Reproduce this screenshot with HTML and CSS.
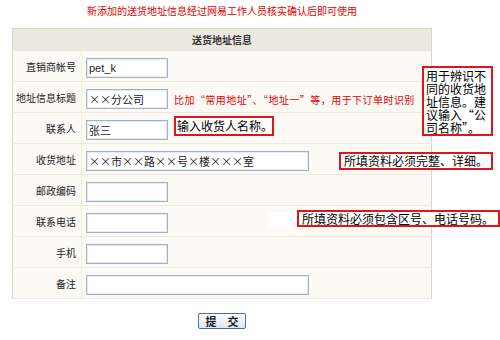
FILE: index.html
```html
<!DOCTYPE html>
<html lang="zh-CN">
<head>
<meta charset="utf-8">
<title>送货地址信息</title>
<link rel="stylesheet" href="styles.css">
</head>
<body>
<div class="page">
  <div class="form-wrap">
    <div class="notice">新添加的送货地址信息经过网易工作人员核实确认后即可使用</div>
    <table class="addr">
      <tr class="head"><th colspan="2">送货地址信息</th></tr>
      <tr><td class="lbl">直销商帐号</td><td class="val"><span class="inp">pet_k</span></td></tr>
      <tr><td class="lbl">地址信息标题</td><td class="val"><span class="inp cjk">××分公司</span><span class="hint">比加“常用地址”、“地址一”等，用于下订单时识别</span></td></tr>
      <tr><td class="lbl">联系人</td><td class="val"><span class="inp cjk">张三</span></td></tr>
      <tr><td class="lbl">收货地址</td><td class="val"><span class="inp cjk wide">××市××路××号×楼×××室</span></td></tr>
      <tr><td class="lbl">邮政编码</td><td class="val"><span class="inp"></span></td></tr>
      <tr><td class="lbl">联系电话</td><td class="val"><span class="inp"></span></td></tr>
      <tr><td class="lbl">手机</td><td class="val"><span class="inp"></span></td></tr>
      <tr><td class="lbl">备注</td><td class="val"><span class="inp wide"></span></td></tr>
    </table>
    <div class="actions"><button class="submit" type="button">提　交</button></div>
  </div>
  <div class="note note-a">用于辨识不同的收货地址信息。建议输入“公司名称”。</div>
  <div class="note note-b">输入收货人名称。</div>
  <div class="note note-c">所填资料必须完整、详细。</div>
  <div class="patch"></div>
  <div class="note note-d">所填资料必须包含区号、电话号码。</div>
</div>
</body>
</html>
```
FILE: styles.css
```css
html, body {
  margin: 0;
  padding: 0;
  background: #ffffff;
}
.page {
  position: relative;
  width: 500px;
  height: 340px;
  overflow: hidden;
  font-family: "Noto Sans CJK SC", "Liberation Sans", sans-serif;
  color: #222;
}
.form-wrap {
  margin-left: 12px;
  width: 420px;
}
.notice {
  height: 28px;
  line-height: 22px;
  text-align: center;
  font-size: 10px;
  color: #e60000;
}
.addr {
  width: 420px;
  border-collapse: collapse;
  border: 1px solid #d9d5cc;
  background: #fcfaf5;
}
.addr th {
  height: 21px;
  padding: 0;
  background: #ece9e1;
  font-size: 10px;
  font-weight: bold;
  color: #333;
  text-align: center;
  border-bottom: 1px solid #ebe5d9;
}
.addr td {
  height: 30px;
  padding: 0;
  border-bottom: 1px solid #efe9dd;
  vertical-align: middle;
}
.addr td.lbl {
  width: 63px;
  padding-right: 5px;
  text-align: right;
  font-size: 10px;
  color: #222;
  border-right: 1px solid #f4ecda;
  background: #fcfaf5;
  white-space: nowrap;
}
.addr td.val {
  padding-left: 4px;
  white-space: nowrap;
}
.inp {
  display: inline-block;
  vertical-align: middle;
  box-sizing: border-box;
  width: 82px;
  height: 20px;
  padding: 0 2px;
  border: 1px solid #a3b1c6;
  box-shadow: inset 0 0 0 1px #e6ebf2;
  background: #ffffff;
  font-family: "Liberation Sans", "Noto Sans CJK SC", sans-serif;
  font-size: 11px;
  line-height: 18px;
  color: #222;
  overflow: hidden;
}
.inp.cjk {
  font-family: "Noto Sans CJK SC", sans-serif;
  font-feature-settings: "fwid" 1;
}
.inp.wide {
  width: 223px;
}
.hint {
  display: inline-block;
  vertical-align: middle;
  margin-left: 6px;
  font-size: 10px;
  letter-spacing: 0.45px;
  color: #e60000;
  font-feature-settings: "fwid" 1;
}
.actions {
  display: flex;
  justify-content: center;
  padding-top: 14px;
}
.submit {
  box-sizing: border-box;
  width: 48px;
  height: 16px;
  padding: 0;
  border: 1px solid #4d6f9f;
  border-radius: 2px;
  background: linear-gradient(#ffffff, #dfe6f0);
  font-family: "Noto Sans CJK SC", sans-serif;
  font-size: 11px;
  font-weight: bold;
  line-height: 13px;
  color: #222;
}
.note {
  position: absolute;
  box-sizing: border-box;
  border: 2px solid #e0141c;
  background: #ffffff;
  color: #000;
  font-family: "Noto Sans CJK SC", sans-serif;
  font-size: 12px;
  white-space: nowrap;
}
.note-a {
  left: 422px;
  top: 66px;
  width: 71px;
  height: 70px;
  padding: 1px 0 0 2px;
  line-height: 13px;
  white-space: normal;
  word-break: break-all;
  font-feature-settings: "fwid" 1;
}
.note-b {
  left: 174px;
  top: 116px;
  width: 100px;
  height: 20px;
  padding-left: 1px;
  line-height: 16px;
}
.note-c {
  left: 339px;
  top: 152px;
  width: 154px;
  height: 18px;
  padding-left: 3px;
  line-height: 14px;
}
.patch {
  position: absolute;
  left: 268px;
  top: 212px;
  width: 29px;
  height: 15px;
  background: #ffffff;
}
.note-d {
  left: 297px;
  top: 210px;
  width: 203px;
  height: 17px;
  padding-left: 3px;
  line-height: 13px;
  overflow: visible;
}
```
